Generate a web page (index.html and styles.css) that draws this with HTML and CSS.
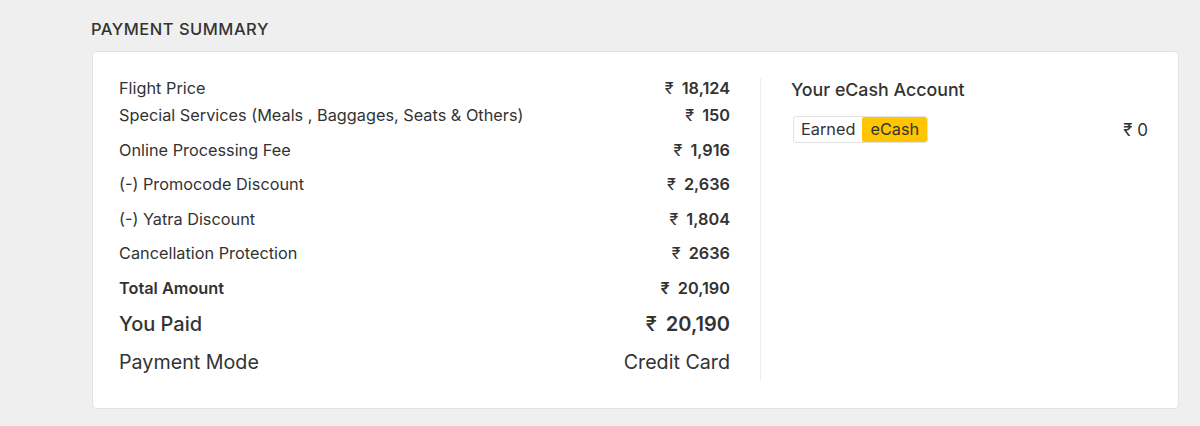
FILE: index.html
```html
<!DOCTYPE html>
<html>
<head>
<meta charset="utf-8">
<link rel="stylesheet" href="styles.css">
</head>
<body>
<div class="wrap">
  <h2 class="title">PAYMENT SUMMARY</h2>
  <div class="card">
    <div class="left">
      <div class="row first"><span>Flight Price</span><span class="val"><span class="rs">₹</span> 18,124</span></div>
      <div class="row tight"><span>Special Services (Meals , Baggages, Seats &amp; Others)</span><span class="val"><span class="rs">₹</span> 150</span></div>
      <div class="row"><span>Online Processing Fee</span><span class="val"><span class="rs">₹</span> 1,916</span></div>
      <div class="row"><span>(-) Promocode Discount</span><span class="val"><span class="rs">₹</span> 2,636</span></div>
      <div class="row"><span>(-) Yatra Discount</span><span class="val"><span class="rs">₹</span> 1,804</span></div>
      <div class="row"><span>Cancellation Protection</span><span class="val"><span class="rs">₹</span> 2636</span></div>
      <div class="row total"><span>Total Amount</span><span class="val"><span class="rs">₹</span> 20,190</span></div>
      <div class="row paid"><span>You Paid</span><span class="val"><span class="rs">₹</span> 20,190</span></div>
      <div class="row mode"><span>Payment Mode</span><span class="val">Credit Card</span></div>
    </div>
    <div class="right">
      <div class="ecash-title">Your eCash Account</div>
      <div class="ecash-row">
        <div class="pill"><span class="earned">Earned</span><span class="ecash">eCash</span></div>
        <span class="amount">₹ 0</span>
      </div>
    </div>
  </div>
</div>
</body>
</html>
```

FILE: styles.css
```css
* { box-sizing: border-box; }
html, body { margin: 0; padding: 0; }
body {
  background: #efefef;
  font-family: "Inter", "Noto Sans", sans-serif;
  color: #333;
  width: 1200px;
  height: 426px;
  overflow: hidden;
}
.wrap {
  padding: 19px 21px 0 92px;
}
.title {
  margin: 0 0 12px -1px;
  font-size: 16.5px;
  font-weight: 500;
  letter-spacing: 0.5px;
  color: #333;
  line-height: 20px;
}
.card {
  background: #fff;
  border: 1px solid #e3e3e3;
  border-radius: 4px;
  height: 358px;
  display: flex;
  padding: 26px 0 0 26px;
}
.left {
  width: 642px;
  padding-right: 30px;
  border-right: 1px solid #ededed;
  height: 303px;
  display: flex;
  flex-direction: column;
}
.row {
  display: flex;
  justify-content: space-between;
  align-items: center;
  font-size: 16.3px;
  line-height: 20px;
  margin-top: 14.6px;
  color: #333;
}
.row.first { margin-top: 0; }
.row.tight { margin-top: 7px; }
.val { font-weight: 600; }
.rs { font-weight: 400; margin-right: 4px; }
.total span:first-child { font-weight: 600; }
.total { margin-top: 15px; }
.paid { font-size: 20px; line-height: 24px; margin-top: 14px; }
.paid span:first-child { font-weight: 500; }
.paid .val { font-weight: 600; }
.mode { font-size: 19.7px; line-height: 24px; margin-top: 14px; }
.mode .val { font-weight: 400; }
.right {
  flex: 1;
  padding: 0 30px 0 30px;
}
.ecash-title {
  font-size: 17.8px;
  font-weight: 500;
  line-height: 22px;
  margin-top: 1px;
}
.ecash-row {
  display: flex;
  justify-content: space-between;
  align-items: center;
  margin-top: 15px;
}
.pill {
  display: flex;
  border: 1px solid #e3e3e3;
  border-radius: 3px;
  overflow: hidden;
  margin-left: 2px;
  font-size: 16.3px;
  line-height: 25px;
}
.earned { padding: 0 7px; color: #333; }
.ecash { padding: 0 8px; background: #fec500; color: #333; border-radius: 2px; }
.amount { font-size: 17px; margin-right: 0; }
```
